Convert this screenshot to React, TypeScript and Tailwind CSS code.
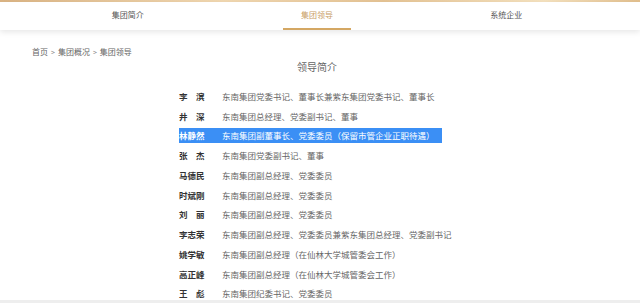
import React from "react";

const leaders: { name: string; desc: string; selected?: boolean }[] = [
  { name: "李　滨", desc: "东南集团党委书记、董事长兼紫东集团党委书记、董事长" },
  { name: "井　深", desc: "东南集团总经理、党委副书记、董事" },
  { name: "林静然", desc: "东南集团副董事长、党委委员（保留市管企业正职待遇）", selected: true },
  { name: "张　杰", desc: "东南集团党委副书记、董事" },
  { name: "马德民", desc: "东南集团副总经理、党委委员" },
  { name: "时斌刚", desc: "东南集团副总经理、党委委员" },
  { name: "刘　丽", desc: "东南集团副总经理、党委委员" },
  { name: "李志荣", desc: "东南集团副总经理、党委委员兼紫东集团总经理、党委副书记" },
  { name: "姚学敏", desc: "东南集团副总经理（在仙林大学城管委会工作）" },
  { name: "高正峰", desc: "东南集团副总经理（在仙林大学城管委会工作）" },
  { name: "王　彪", desc: "东南集团纪委书记、党委委员" },
];

const tabs = [
  { label: "集团简介", active: false },
  { label: "集团领导", active: true },
  { label: "系统企业", active: false },
];

export default function App() {
  return (
    <div
      className="w-[640px] h-[303px] overflow-hidden bg-white flex flex-col"
      style={{ fontFamily: '"Noto Sans CJK SC", "Noto Sans", sans-serif' }}
    >
      <div className="h-[2px] w-full bg-[linear-gradient(90deg,#dcb584_0%,#f2d9b2_35%,#e6c494_60%,#f6e3c0_85%,#e3c08e_100%)]" />
      <div className="relative z-10 h-[28px] w-full bg-white shadow-[0_2px_6px_rgba(0,0,0,0.10)]">
        <div className="w-[634px] h-full">
          <div className="w-[568px] mx-auto h-full grid grid-cols-3">
            {tabs.map((t) => (
              <div key={t.label} className="h-full flex flex-col items-center justify-between">
                <div
                  className={`pt-[8px] text-[8px] leading-[9px] ${
                    t.active ? "text-[#c9a067]" : "text-[#555555]"
                  }`}
                >
                  {t.label}
                </div>
                {t.active ? (
                  <div className="w-[68px] h-[2px] bg-[#d4a763]" />
                ) : (
                  <div className="h-[2px]" />
                )}
              </div>
            ))}
          </div>
        </div>
      </div>

      <div className="flex-1 overflow-hidden w-[634px]">
        <div className="w-[568px] mx-auto">
          <div className="mt-[17px] flex items-center gap-[3px] text-[8px] leading-[10px] text-[#666666] ml-[-1px]">
            <span>首页</span>
            <span className="text-[7px] text-[#888888]">&gt;</span>
            <span>集团概况</span>
            <span className="text-[7px] text-[#888888]">&gt;</span>
            <span>集团领导</span>
          </div>
          <div className="mt-[4px] text-center text-[10px] leading-[12px] text-[#666666]">
            领导简介
          </div>
          <div className="mt-[13.6px] w-[276px] mx-auto">
            {leaders.map((l) => (
              <div key={l.name} className="h-[19.75px] flex items-center">
                <div
                  className={`flex items-center h-[15px] ${
                    l.selected ? "bg-[#3b8ff5] pr-[7px]" : ""
                  }`}
                >
                  <span
                    className={`w-[43px] shrink-0 text-[8.5px] leading-[15px] font-bold whitespace-pre ${
                      l.selected ? "text-white" : "text-[#333333]"
                    }`}
                  >
                    {l.name}
                  </span>
                  <span
                    className={`text-[8.5px] leading-[15px] whitespace-nowrap ${
                      l.selected ? "text-white" : "text-[#666666]"
                    }`}
                  >
                    {l.desc}
                  </span>
                </div>
              </div>
            ))}
          </div>
        </div>
      </div>
      <div className="h-[3px] w-full bg-[#eeeeee]" />
    </div>
  );
}
